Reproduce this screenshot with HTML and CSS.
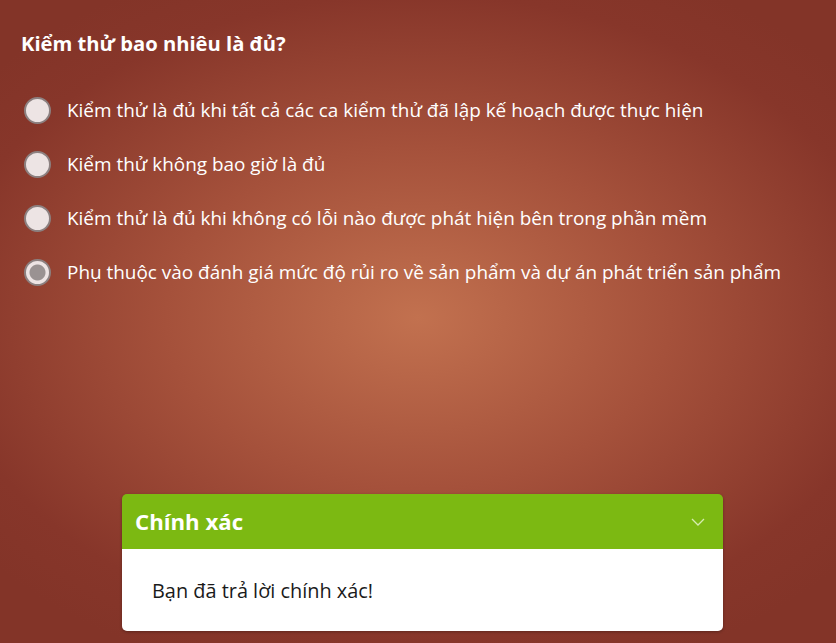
FILE: index.html
```html
<!DOCTYPE html>
<html lang="vi">
<head>
<meta charset="utf-8">
<link rel="stylesheet" href="styles.css">
</head>
<body>
<div class="page">
  <h1 class="question">Kiểm thử bao nhiêu là đủ?</h1>
  <ul class="options">
    <li class="option"><span class="radio"></span><span class="label">Kiểm thử là đủ khi tất cả các ca kiểm thử đã lập kế hoạch được thực hiện</span></li>
    <li class="option"><span class="radio"></span><span class="label">Kiểm thử không bao giờ là đủ</span></li>
    <li class="option"><span class="radio"></span><span class="label">Kiểm thử là đủ khi không có lỗi nào được phát hiện bên trong phần mềm</span></li>
    <li class="option"><span class="radio checked"></span><span class="label">Phụ thuộc vào đánh giá mức độ rủi ro về sản phẩm và dự án phát triển sản phẩm</span></li>
  </ul>
  <div class="spacer"></div>
  <div class="feedback">
    <div class="fb-head">
      <span class="fb-title">Chính xác</span>
      <svg class="chev" width="14" height="8" viewBox="0 0 14 8"><path d="M1 1 L7 7 L13 1" fill="none" stroke="#d6ecb0" stroke-width="1.3"/></svg>
    </div>
    <div class="fb-body">Bạn đã trả lời chính xác!</div>
  </div>
</div>
</body>
</html>
```
FILE: styles.css
```css
html, body { margin: 0; padding: 0; height: 100%; }
body {
  background: radial-gradient(ellipse 560px 380px at 418px 318px, #c2714f 0%, #a5513b 45%, #87362a 85%, #833428 100%);
  background-color: #833428;
  font-family: "Open Sans", "Noto Sans", sans-serif;
  color: #fff;
  overflow: hidden;
}
.page {
  height: 643px;
  display: flex;
  flex-direction: column;
  padding: 0 0 12px 0;
  box-sizing: border-box;
}
.question {
  margin: 29px 0 0 21px;
  font-size: 20.2px;
  font-weight: 700;
  line-height: 28px;
}
.options {
  list-style: none;
  margin: 39px 0 0 24px;
  padding: 0;
  display: flex;
  flex-direction: column;
  gap: 26px;
}
.option {
  display: flex;
  align-items: center;
  gap: 16px;
  height: 28px;
}
.radio {
  width: 23px;
  height: 23px;
  border-radius: 50%;
  border: 2.5px solid #8c8080;
  background: #ede4e4;
  flex: none;
}
.radio.checked {
  background: radial-gradient(circle, #9a9292 0 7.5px, #ede4e4 8.5px);
}
.label {
  font-size: 18.93px;
  line-height: 26px;
}
.spacer { flex: 1; }
.feedback {
  margin: 0 113px 0 122px;
  border-radius: 5px;
  overflow: hidden;
  box-shadow: 0 1px 3px rgba(0,0,0,0.3);
}
.fb-head {
  background: #7cb912;
  height: 55px;
  display: flex;
  align-items: center;
  justify-content: space-between;
  padding: 0 18px 0 13px;
}
.fb-title {
  font-size: 22.2px;
  font-weight: 700;
}
.fb-body {
  background: #fff;
  color: #1a1a1a;
  height: 82px;
  box-sizing: border-box;
  padding: 28px 0 0 30px;
  font-size: 19.9px;
}
```
